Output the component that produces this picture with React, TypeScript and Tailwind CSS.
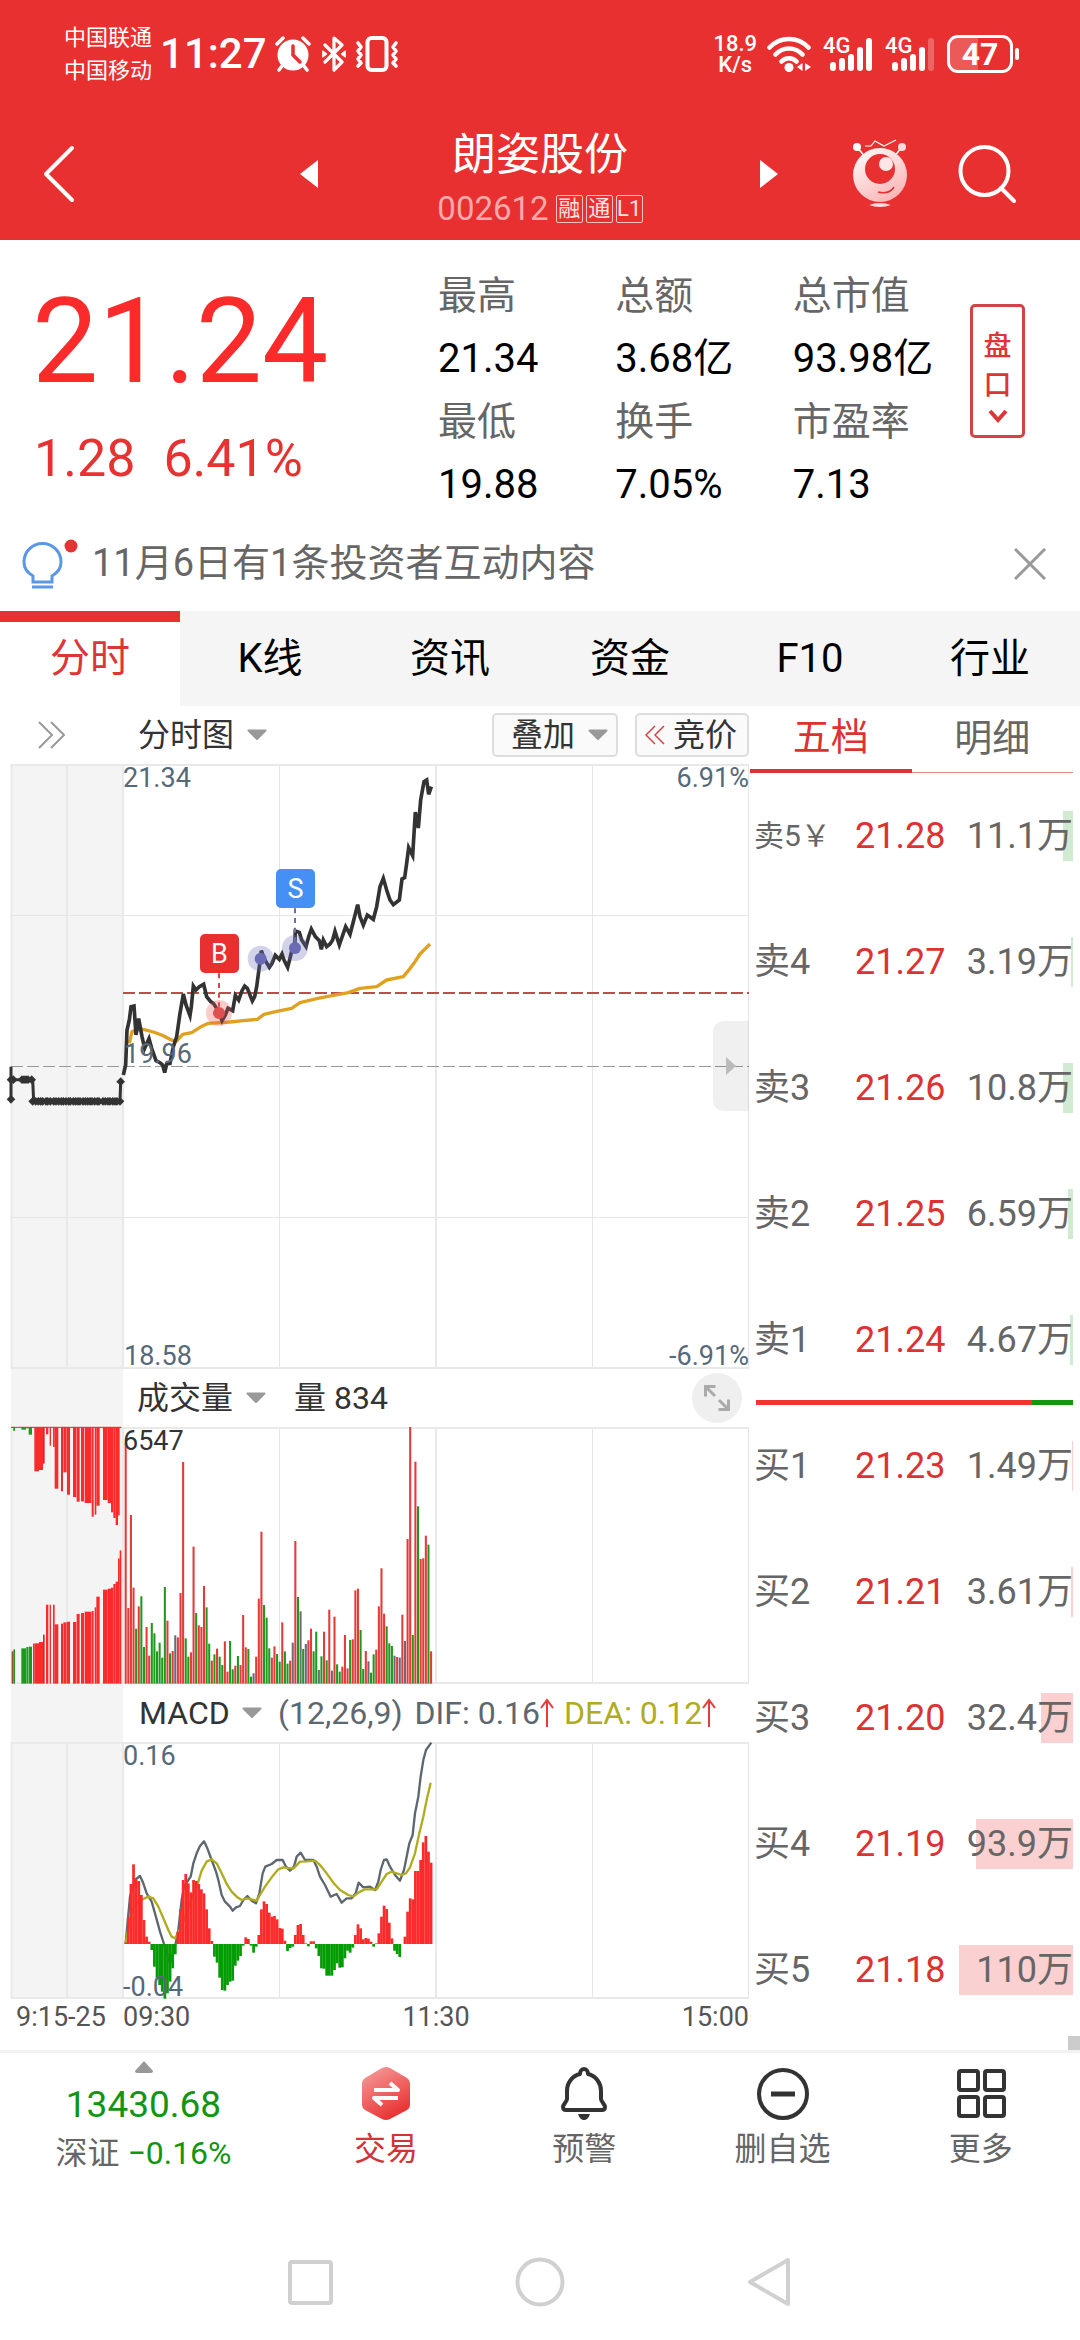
import type { ReactNode } from "react";
import clsx from "clsx";

const STEP = 7.83;
const FIRST_X = 377;

const colors: Record<string, string> = { r: "#e63a3a", g: "#1d9a1d", n: "#6b6878" };

// one entry per minute: colour key + top of the bar
const volume =
  "r310 r805 r526 r744 g867 r800 g770 g922 r862 r948 g850 g881 g935 g909 g954 g742 r843 g941 r934 n887 r893 r760 r367 g896 g951 r938 r621 g820 r857 r862 r739 g803 g912 r963 g944 r927 g951 g976 r905 r996 g904 g989 r978 g949 r976 r826 r923 g928 g1011 n1001 r951 r777 r576 g796 g834 g926 r954 r920 g943 g966 r848 g935 g972 r963 n909 r604 g772 n815 g928 n913 r902 r867 g935 g876 n991 g950 r876 g962 r810 n993 r831 g974 g996 r981 r886 r986 g901 r899 r752 r747 g871 g988 r934 n965 g999 g944 r930 r800 r686 r822 g860 g911 g919 n948 r952 n954 r825 n904 r598 r262 g886 r366 g500 r658 r656 r588 g615 r935"
    .split(" ")
    .map((v) => ({ fill: colors[v[0]], top: Number(v.slice(1)) }));

// call auction bars: x, width, lower bar top, upper bar bottom
const auction: [string, number, number, number, number][] = [
  ["#a8442a", 35, 5, 935, 264], ["#1d9a1d", 40, 5, 929, 274], ["#1d9a1d", 64, 14, 926, 270],
  ["#1d9a1d", 79, 6, 922, 266], ["#1d9a1d", 86, 10, 921, 285], ["#fb2b2b", 99, 4, 912, 263],
  ["#fb2b2b", 103, 14, 911, 395], ["#fb2b2b", 117, 12, 907, 391], ["#c92f30", 129, 5, 885, 372],
  ["#fb2b2b", 138, 7, 795, 284], ["#fb2b2b", 149, 4, 795, 318], ["#fb2b2b", 159, 5, 795, 322],
  ["#fb2b2b", 164, 11, 854, 447], ["#e03030", 183, 6, 852, 455], ["#fb2b2b", 190, 10, 848, 398],
  ["#fb2b2b", 201, 9, 846, 465], ["#fb2b2b", 219, 10, 847, 472], ["#fb2b2b", 230, 9, 823, 486],
  ["#fb2b2b", 243, 9, 820, 485], ["#fb2b2b", 254, 20, 816, 490], ["#fb2b2b", 275, 6, 814, 531],
  ["#fb2b2b", 284, 5, 803, 525], ["#fb2b2b", 289, 10, 771, 498], ["#fb2b2b", 309, 14, 750, 481],
  ["#fb2b2b", 323, 10, 747, 490], ["#fb2b2b", 333, 7, 744, 518], ["#fb2b2b", 340, 7, 733, 535],
  ["#fb2b2b", 347, 7, 726, 556], ["#fb2b2b", 354, 5, 656, 527], ["#fb2b2b", 359, 5, 632, 265],
];

const macd = [
  788, 712, 612, 553, 600, 603, 645, 720, 770, 785, 810, 860, 893, 915, 935, 956, 940, 905, 865, 823,
  755, 688, 600, 582, 610, 637, 600, 603, 612, 628, 640, 688, 745, 783, 830, 848, 893, 930, 932, 915,
  905, 902, 857, 842, 828, 797, 772, 777, 797, 818, 800, 765, 688, 664, 672, 698, 710, 708, 718, 744,
  746, 782, 813, 804, 800, 765, 735, 732, 765, 790, 799, 784, 784, 805, 828, 865, 866, 887, 887, 887,
  870, 850, 863, 862, 835, 812, 818, 803, 765, 733, 745, 778, 774, 776, 785, 800, 790, 760, 710, 677,
  687, 728, 775, 812, 822, 831, 792, 770, 695, 655, 658, 573, 573, 540, 487, 468, 515, 548,
];

const priceLine =
  "370,1425 377,1395 381,1290 388,1260 393,1220 402,1218 408,1305 416,1256 426,1310 434,1345 447,1316 455,1345 468,1382 480,1388 488,1395 494,1418 500,1392 510,1390 520,1340 530,1310 540,1240 550,1182 558,1215 570,1247 574,1220 580,1158 588,1170 598,1160 611,1153 620,1190 632,1205 640,1210 650,1225 657,1238 666,1262 676,1245 684,1225 698,1232 706,1186 716,1200 726,1172 734,1158 742,1165 757,1203 764,1190 770,1160 778,1100 784,1052 792,1075 808,1102 816,1090 826,1066 838,1078 846,1062 852,1080 863,1102 870,1075 876,1050 884,1045 886,993 898,997 905,1020 918,1040 926,1010 934,987 946,1010 958,1022 964,1048 970,1020 980,1040 990,1032 998,1020 1005,994 1018,1035 1030,1000 1037,980 1050,1003 1060,965 1073,914 1080,950 1090,975 1102,945 1120,958 1130,920 1140,860 1150,835 1160,870 1170,900 1180,914 1198,900 1206,837 1214,833 1220,790 1226,743 1238,767 1246,636 1255,684 1262,600 1272,545 1280,540 1286,583 1294,560";

const averageLine =
  "388,1330 396,1295 410,1290 430,1288 460,1296 485,1305 510,1318 528,1325 548,1303 575,1298 600,1282 625,1270 690,1266 730,1262 772,1258 792,1243 830,1234 875,1225 900,1208 950,1196 1000,1186 1045,1178 1080,1165 1130,1160 1160,1140 1210,1130 1225,1112 1245,1085 1260,1062 1290,1032";

const difLine =
  "377,790 390,650 405,600 420,588 430,610 440,640 455,665 465,700 480,755 492,792 510,850 527,790 535,750 545,660 552,620 565,600 572,590 580,550 590,520 600,498 612,484 622,505 635,540 648,575 655,600 665,645 675,665 690,680 698,692 708,682 720,678 730,660 742,648 755,662 768,670 778,640 788,580 796,560 815,552 830,540 848,540 858,560 870,572 882,560 890,530 902,518 915,540 940,540 950,560 960,590 975,615 992,650 1010,642 1025,668 1040,655 1055,655 1067,640 1076,608 1090,622 1110,620 1125,630 1135,605 1142,570 1152,540 1160,538 1170,560 1185,585 1200,602 1212,570 1220,530 1228,490 1238,465 1245,400 1255,350 1262,290 1270,240 1278,210 1294,188";

const deaLine =
  "377,790 395,690 415,665 430,657 445,650 460,655 475,680 490,715 505,750 515,770 525,775 545,740 570,670 595,605 605,572 620,545 635,538 650,550 665,580 680,612 695,635 710,650 725,660 742,655 770,662 780,645 795,620 815,592 835,568 850,562 880,566 900,545 920,544 945,542 960,555 980,580 1000,608 1020,630 1045,645 1060,650 1075,638 1095,628 1130,628 1145,605 1160,582 1175,575 1190,580 1205,585 1218,580 1230,562 1245,520 1258,460 1270,410 1280,360 1292,308";

const auctionDots = [
  ...[33, 40, 66, 72, 78, 84, 95].map((x) => [x, 1439]),
  [33, 1498],
  ...[98, 107, 115, 122, 128, 138, 143, 151, 161, 168, 176, 184, 190, 198, 206, 211, 220, 227, 234, 240, 249, 256, 263, 270, 276, 284, 292, 297, 309, 316, 324, 330, 338, 345, 351, 360].map((x) => [x, 1504]),
  [362, 1445],
];

const stats = [
  ["最高", "总额", "总市值"],
  ["21.34", "3.68亿", "93.98亿"],
  ["最低", "换手", "市盈率"],
  ["19.88", "7.05%", "7.13"],
];

const tabs = ["分时", "K线", "资讯", "资金", "F10", "行业"];

const asks = [
  { label: "卖5￥", price: "21.28", volume: "11.1万", bar: 10 },
  { label: "卖4", price: "21.27", volume: "3.19万", bar: 2 },
  { label: "卖3", price: "21.26", volume: "10.8万", bar: 10 },
  { label: "卖2", price: "21.25", volume: "6.59万", bar: 5 },
  { label: "卖1", price: "21.24", volume: "4.67万", bar: 3 },
];

const bids = [
  { label: "买1", price: "21.23", volume: "1.49万", bar: 1 },
  { label: "买2", price: "21.21", volume: "3.61万", bar: 2 },
  { label: "买3", price: "21.20", volume: "32.4万", bar: 32 },
  { label: "买4", price: "21.19", volume: "93.9万", bar: 97 },
  { label: "买5", price: "21.18", volume: "110万", bar: 114 },
];

function SignalBars({ weak }: { weak?: boolean }) {
  return (
    <span className="relative block h-[36px] w-[50px] shrink-0">
      <span className="absolute left-0 top-0 text-[22px] leading-[20px] font-medium">4G</span>
      <svg viewBox="0 0 50 36" className="h-full w-full" stroke="#fff" strokeWidth="6" strokeLinecap="round">
        <path d="M10 29v3M19 25v7M28 21v11M37 14v18" />
        <path d="M46 5v27" opacity={weak ? 0.25 : 1} />
      </svg>
    </span>
  );
}

function StatusBar() {
  return (
    <div className="flex h-[108px] items-center pl-16 pr-[61px]">
      <div className="text-[22px] leading-[33px]">
        <div>中国联通</div>
        <div>中国移动</div>
      </div>
      <span className="ml-2 text-[42px] leading-none font-medium">11:27</span>
      <svg viewBox="0 0 36 36" className="ml-2 h-9 w-9">
        <circle cx="18" cy="19" r="15.5" fill="#fff" />
        <path d="M2 8l6-6M28 2l6 6M7 30l-3 4M29 30l3 4" stroke="#fff" strokeWidth="3.5" strokeLinecap="round" />
        <path d="M18 10v9l7 7" fill="none" stroke="#e83030" strokeWidth="3.5" strokeLinecap="round" />
      </svg>
      <svg viewBox="0 0 26 36" className="ml-2.5 h-9 w-[26px]" fill="none" stroke="#fff" strokeWidth="3.2" strokeLinejoin="round" strokeLinecap="round">
        <path d="M4 9l17 17-8 8V2l8 7L4 26" />
        <path d="M2 15l4 3-4 3zM24 15l-4 3 4 3z" fill="#fff" strokeWidth="1" />
      </svg>
      <svg viewBox="0 0 44 36" className="ml-2 h-9 w-11" fill="none" stroke="#fff" strokeWidth="3.2" strokeLinejoin="round" strokeLinecap="round">
        <rect x="12.500" y="2" width="19" height="32" rx="4" strokeWidth="4" />
        <path d="M3 7l3 4-3 4 3 4-3 4 3 4-3 3M41 7l-3 4 3 4-3 4 3 4-3 4 3 3" strokeWidth="3.6" />
      </svg>
      <div className="ml-auto mr-2.5 text-center text-[22px] leading-[21px] font-medium">
        <div>18.9</div>
        <div>K/s</div>
      </div>
      <svg viewBox="0 0 44 36" className="mr-3 h-9 w-11 shrink-0" fill="none" stroke="#fff" strokeWidth="4.5" strokeLinecap="round">
        <path d="M2.500 11.500C13 0 31 0 41.500 11.500M8.500 18.500c7.500-8 19.500-8 27 0M14.500 25.500c4-4.500 11-4.500 15 0" />
        <circle cx="22" cy="31.500" r="4.500" fill="#fff" stroke="none" />
        <path d="M35.500 27v8l-5.500-4zM38 27v8l6-4z" fill="#fff" stroke="none" />
      </svg>
      <SignalBars />
      <span className="w-3" />
      <SignalBars weak />
      <div className="relative ml-3 flex h-[38px] w-[66px] shrink-0 items-center justify-center overflow-hidden rounded-[11px] border-3 border-white">
        <span className="absolute inset-y-0 left-0 w-[47%] bg-white/20" />
        <span className="relative text-[32px] leading-none font-bold">47</span>
      </div>
      <span className="ml-0.5 h-3 w-1 rounded-full bg-white" />
    </div>
  );
}

function TitleBar() {
  return (
    <div className="grid h-[132px] grid-cols-[1fr_210px_1fr] items-center">
      <div className="flex items-center justify-between pl-[43px] pr-[117px]">
        <button aria-label="返回">
          <svg viewBox="0 0 32 58" className="h-[58px] w-8" fill="none" stroke="#fff" strokeWidth="4" strokeLinecap="round" strokeLinejoin="round">
            <path d="M29 3L3 29l26 26" />
          </svg>
        </button>
        <button aria-label="上一只">
          <svg viewBox="0 0 18 28" className="h-7 w-[18px]" fill="#fff">
            <path d="M18 0v28L0 14z" />
          </svg>
        </button>
      </div>
      <div className="flex flex-col items-center pt-1.5">
        <h1 className="text-[44px] leading-[64px]">朗姿股份</h1>
        <div className="flex items-center gap-[3px]">
          <span className="mr-1 text-[33px] leading-[44px] text-[#fba9a9]">002612</span>
          {["融", "通", "L1"].map((tag) => (
            <span
              key={tag}
              className="flex h-7 w-[27px] items-center justify-center rounded-[2px] border border-[#fbc4c4] text-[22px] leading-none text-[#ffe3e3]"
            >
              {tag}
            </span>
          ))}
        </div>
      </div>
      <div className="flex items-center justify-between pl-[115px] pr-16">
        <button aria-label="下一只">
          <svg viewBox="0 0 18 28" className="h-7 w-[18px]" fill="#fff">
            <path d="M0 0v28l18-14z" />
          </svg>
        </button>
        <div className="flex w-[164px] items-center justify-between">
          <button aria-label="智能助手">
            <svg viewBox="0 0 56 70" className="h-[70px] w-14" fill="none">
              <defs>
                <linearGradient id="robot" x1="0" y1="0" x2="0.600" y2="1">
                  <stop offset="0" stopColor="#fff" />
                  <stop offset="1" stopColor="#fcb7b7" />
                </linearGradient>
              </defs>
              <path d="M5 8l9 11M50 8l-9 11" stroke="#fff" strokeWidth="1.500" />
              <circle cx="5" cy="8" r="4" fill="#fff" />
              <circle cx="50" cy="8" r="4" fill="#ffdcdc" />
              <path d="M13 7h6l4-5 9 5L44 1" stroke="#fff" strokeWidth="1.200" />
              <circle cx="28" cy="36" r="27" fill="url(#robot)" />
              <circle cx="28" cy="30" r="15" fill="#e83030" />
              <circle cx="34" cy="25" r="7" fill="#ffe6e6" />
              <path d="M26 53q11 3 16-5" stroke="#e83030" strokeWidth="1.500" />
              <path d="M17 66q11-4 22 0-11 4-22 0z" fill="#fdd" />
            </svg>
          </button>
          <button aria-label="搜索">
            <svg viewBox="0 0 58 60" className="h-[60px] w-[58px]" fill="none" stroke="#fff" strokeWidth="4" strokeLinecap="round">
              <circle cx="26.500" cy="27" r="24" />
              <path d="M43 44l13 13" />
            </svg>
          </button>
        </div>
      </div>
    </div>
  );
}

function Quote() {
  return (
    <section className="flex pt-6">
      <div className="w-[438px] shrink-0 pl-8 text-[#fb2b2b]">
        <div className="text-[118px] leading-[156px]">21.24</div>
        <div className="flex gap-7 pl-0.5 text-[52px] leading-[78px] text-[#e83232]">
          <span>1.28</span>
          <span>6.41%</span>
        </div>
      </div>
      <table className="w-[532px] shrink-0 table-fixed text-left">
        <tbody>
          {stats.map((row, i) => (
            <tr key={i} className="h-[63px]">
              {row.map((cell) =>
                i % 2 === 0 ? (
                  <th key={cell} className="p-0 text-[39px] leading-[60px] font-normal text-[#666]">{cell}</th>
                ) : (
                  <td key={cell} className="p-0 text-[40px] leading-[60px] text-black">{cell}</td>
                )
              )}
            </tr>
          ))}
        </tbody>
      </table>
      <button className="ml-auto mr-[55px] mt-10 flex h-[134px] w-[55px] shrink-0 flex-col items-center rounded-[5px] border-3 border-[#d24444] pt-5 text-[28px] leading-[39px] font-medium text-[#dc3535]">
        <span>盘</span>
        <span>口</span>
        <svg viewBox="0 0 20 16" className="mt-1 h-4 w-5" fill="none" stroke="#dc3535" strokeWidth="4">
          <path d="M2 2l8 9 8-9" />
        </svg>
      </button>
    </section>
  );
}

function Tip() {
  return (
    <div className="flex h-[95px] items-center pl-[22px] pr-[34px] text-[38px] text-[#666]">
      <svg viewBox="0 0 58 54" className="h-[54px] w-[58px]" fill="none" stroke="#5a97e6" strokeWidth="3">
        <path d="M11 45v-6C4 35 2 30 2 25a18 18 0 0 1 37 0c0 5-2 10-9 14v6zM10 50h21" />
        <circle cx="49" cy="9" r="6.500" fill="#e23434" stroke="none" />
      </svg>
      <p className="ml-3">11月6日有1条投资者互动内容</p>
      <button aria-label="关闭" className="ml-auto">
        <svg viewBox="0 0 32 32" className="h-8 w-8" stroke="#999" strokeWidth="3">
          <path d="M1 1l30 30M31 1L1 31" />
        </svg>
      </button>
    </div>
  );
}

function Dropdown({ label, options, className }: { label: string; options: string[]; className?: string }) {
  return (
    <label className={clsx("relative inline-flex items-center text-[32px] leading-[40px] text-[#333]", className)}>
      <select aria-label={label} className="appearance-none bg-transparent pr-8 outline-none">
        {options.map((o) => (
          <option key={o}>{o}</option>
        ))}
      </select>
      <svg viewBox="0 0 20 12" className="pointer-events-none -ml-5 h-3 w-5" fill="#999" stroke="#999" strokeWidth="2" strokeLinejoin="round">
        <path d="M1.500 1.500h17L10 10z" />
      </svg>
    </label>
  );
}

function Grid({ height, rows = [] }: { height: number; rows?: number[] }) {
  return (
    <g fill="none" stroke="#e6e6e6">
      <rect x="11" y="0" width="112" height={height} fill="#f4f4f4" stroke="none" />
      <path d={`M11.500 0V${height}M67 0V${height}M123 0V${height}M436 0V${height}`} strokeWidth="2" stroke="#e9e9e9" />
      <path d={`M279.500 0V${height}M592.500 0V${height}M748.500 0V${height}`} />
      <path d={`M11 1H749M11 ${height - 1}H749`} strokeWidth="2" stroke="#e9e9e9" />
      {rows.map((y) => (
        <path key={y} d={`M11 ${y}H749`} />
      ))}
    </g>
  );
}

function PaneHeader({ children }: { children: ReactNode }) {
  return (
    <div className="flex h-[58px] items-center pl-[11px]">
      <div className="h-full w-28 shrink-0 bg-[#f4f4f4]" />
      {children}
    </div>
  );
}

function PriceChart() {
  return (
    <div className="relative">
      <svg viewBox="0 0 750 605" className="block h-auto w-full overflow-visible" fontSize="27" fill="#56697a">
        <Grid height={605} rows={[151.5, 453.5]} />
        <path d="M123 229H749" stroke="#c04b4b" strokeWidth="2" strokeDasharray="12 4" />
        <path d="M11 302.500H749" stroke="#999" strokeDasharray="12 4" />
        <g transform="translate(0 -164) scale(0.33333)" fill="none" strokeLinejoin="round">
          <polyline points={averageLine} stroke="#e0a020" strokeWidth="10" />
          <path d="M33 1400V1498M33 1439H98L101 1504H360L362 1445" stroke="#333" strokeWidth="9" />
          <polyline points={priceLine} stroke="#333" strokeWidth="11" strokeLinejoin="miter" />
          {auctionDots.map(([x, y]) => (
            <path key={`${x}-${y}`} d={`M${x - 13} ${y}l13-13 13 13-13 13z`} fill="#333" />
          ))}
          <g strokeWidth="6" strokeDasharray="15 14">
            <path d="M657 1120V1220" stroke="#d04a4a" />
            <path d="M885 925V1030" stroke="#6b6bb5" />
          </g>
          <circle cx="657" cy="1239" r="39" fill="#e55" opacity="0.300" />
          <circle cx="657" cy="1239" r="18" fill="#e05050" />
          {[[782, 1076], [885, 1044]].map(([x, y]) => (
            <g key={x} fill="#6b6bb5">
              <circle cx={x} cy={y} r="39" opacity="0.300" />
              <circle cx={x} cy={y} r="18" />
            </g>
          ))}
        </g>
        <rect x="200" y="170" width="39" height="39" rx="5" fill="#e83030" />
        <rect x="276" y="105" width="39" height="39" rx="5" fill="#4690f5" />
        <g fill="#fff" textAnchor="middle">
          <text x="219.500" y="199">B</text>
          <text x="295.500" y="134">S</text>
        </g>
        <text x="123" y="23">21.34</text>
        <text x="124" y="299">19.96</text>
        <text x="124" y="601">18.58</text>
        <g textAnchor="end">
          <text x="749" y="23">6.91%</text>
          <text x="749" y="601">-6.91%</text>
        </g>
      </svg>
      <button aria-label="收起盘口" className="absolute right-px top-[257px] flex h-[90px] w-9 items-center justify-center rounded-l-[10px] bg-black/6">
        <svg viewBox="0 0 10 18" className="h-[18px] w-2.5" fill="#bbb">
          <path d="M0 0v18l10-9z" />
        </svg>
      </button>
    </div>
  );
}

function VolumeChart() {
  return (
    <svg viewBox="0 0 750 257" className="block h-auto w-full overflow-visible">
      <Grid height={257} />
      <g transform="translate(0 -87.333) scale(0.33333)">
        <path d="M33 263H364" stroke="#e05050" strokeWidth="4" />
        {auction.map(([fill, x, w, low, high]) => (
          <g key={x} fill={fill}>
            <rect x={x} y={low} width={w} height={1032 - low} />
            <rect x={x} y="262" width={w} height={high - 262} />
          </g>
        ))}
        {volume.map((v, i) => (
          <rect key={i} x={FIRST_X + i * STEP - 3} y={v.top} width="6.200" height={1032 - v.top} fill={v.fill} />
        ))}
      </g>
      <text x="123" y="23" fontSize="27" fill="#333">6547</text>
    </svg>
  );
}

function MacdChart() {
  return (
    <svg viewBox="0 0 750 257" className="block h-auto w-full overflow-visible" fontSize="27" fill="#56697a">
      <Grid height={257} />
      <g transform="translate(0 -62) scale(0.33333)">
        <g fill="none" strokeWidth="7" strokeLinejoin="round">
          <polyline points={difLine} stroke="#5d6770" />
          <polyline points={deaLine} stroke="#b0ac20" />
        </g>
        {macd.map((y, i) => (
          <rect
            key={i}
            x={FIRST_X + i * STEP - 4}
            y={Math.min(y, 792)}
            width="8.200"
            height={Math.abs(792 - y)}
            fill={y < 792 ? "#fb2b2b" : "#049c04"}
          />
        ))}
      </g>
      <text x="123" y="23">0.16</text>
      <text x="123" y="254">-0.04</text>
    </svg>
  );
}

function Charts() {
  return (
    <div className="min-w-0 flex-1">
      <div className="flex h-[58px] items-center">
        <button aria-label="展开" className="ml-[37px] w-[101px]">
          <svg viewBox="0 0 30 30" className="h-[30px] w-[30px]" fill="none" stroke="#999" strokeWidth="2">
            <path d="M2 2l13 13L2 28M14 2l13 13-13 13" />
          </svg>
        </button>
        <Dropdown label="图表类型" options={["分时图"]} />
        <Dropdown
          label="叠加"
          options={["叠加"]}
          className="ml-auto h-[44px] rounded-[5px] border-2 border-[#ddd] bg-[#fafafa] pl-[17px] pr-2"
        />
        <button className="ml-[17px] mr-px flex h-[44px] items-center gap-2 rounded-[5px] border-2 border-[#ddd] bg-[#fafafa] pl-2 pr-2.5 text-[32px] leading-[40px] text-[#333]">
          <svg viewBox="0 0 20 20" className="h-5 w-5" fill="none" stroke="#d24444" strokeWidth="1.500">
            <path d="M10 1l-9 9 9 9M19 1l-9 9 9 9" />
          </svg>
          竞价
        </button>
      </div>
      <PriceChart />
      <PaneHeader>
        <Dropdown label="副图一" options={["成交量"]} className="ml-3.5" />
        <span className="ml-7 text-[32px] text-[#333]">量 834</span>
        <button aria-label="全屏" className="ml-auto mr-2 flex h-[50px] w-[50px] items-center justify-center rounded-full bg-[#efefef]">
          <svg viewBox="0 0 26 26" className="h-[26px] w-[26px]" fill="none" stroke="#aaa" strokeWidth="3">
            <path d="M1.500 11.500v-10h10M2 2l9 9M24.500 14.500v10h-10M24 24l-9-9" />
          </svg>
        </button>
      </PaneHeader>
      <VolumeChart />
      <PaneHeader>
        <Dropdown label="副图二" options={["MACD"]} className="ml-4" />
        <div className="ml-4 flex items-center whitespace-nowrap text-[32px] text-[#5d6770]">
          <span className="mr-3">(12,26,9)</span>
          <span>DIF: 0.16</span>
          <UpArrow />
          <span className="ml-2.5 text-[#b0ac20]">DEA: 0.12</span>
          <UpArrow />
        </div>
      </PaneHeader>
      <MacdChart />
      <div className="flex h-[51px] pl-4 pr-px text-[27px] leading-[36px] text-[#555]">
        <span className="w-[107px] shrink-0 whitespace-nowrap">9:15-25</span>
        <div className="flex flex-1 justify-between">
          <span>09:30</span>
          <span>11:30</span>
          <span>15:00</span>
        </div>
      </div>
    </div>
  );
}

function UpArrow() {
  return (
    <svg viewBox="0 0 14 30" className="h-[30px] w-3.5" fill="none" stroke="#e83a3a" strokeWidth="2">
      <path d="M7 29V2M1 10l6-8 6 8" />
    </svg>
  );
}

function Levels({ rows, barClass }: { rows: typeof asks; barClass: string }) {
  return (
    <table className="w-full table-fixed text-left text-[36px] leading-[50px] whitespace-nowrap text-[#666]">
      <tbody>
        {rows.map((r) => (
          <tr key={r.label} className="h-[126px]">
            <th className={clsx("w-[105px] p-0 pl-1 font-normal", r.label.length > 2 && "text-[30px]")}>{r.label}</th>
            <td className="w-[98px] p-0 text-[#dd3232]">{r.price}</td>
            <td className="p-0">
              <div className="relative text-right">
                <span className={clsx("absolute inset-y-0 right-0", barClass)} style={{ width: r.bar }} />
                <span className="relative">{r.volume}</span>
              </div>
            </td>
          </tr>
        ))}
      </tbody>
    </table>
  );
}

function OrderBook() {
  return (
    <aside className="w-[330px] shrink-0 pr-[7px]">
      <div className="grid h-[67px] grid-cols-2 text-[38px]">
        <button className="border-b-4 border-[#d83434] text-[#dd3232]">五档</button>
        <button className="border-b border-[#e08a8a] pb-px text-[#666]">明细</button>
      </div>
      <div className="relative">
        <Levels rows={asks} barClass="bg-[#d0ebd2]" />
        <div className="absolute -bottom-0.5 left-1.5 right-0 flex h-[5px] bg-[#ee3434]">
          <span className="ml-auto w-[13%] bg-[#14960f]" />
        </div>
      </div>
      <Levels rows={bids} barClass="bg-[#fad0d0]" />
    </aside>
  );
}

function Action({ label, active, children }: { label: string; active?: boolean; children: ReactNode }) {
  return (
    <button className={clsx("flex flex-1 flex-col items-center pt-3 text-[32px] leading-[48px]", active ? "text-[#d03434]" : "text-[#666]")}>
      <svg viewBox="0 0 56 60" className="h-[60px] w-14" fill="none" stroke="#333" strokeWidth="4" strokeLinejoin="round">
        {children}
      </svg>
      {label}
    </button>
  );
}

function Toolbar() {
  return (
    <footer className="relative flex h-[150px] border-t-3 border-[#f2f2f2]">
      <span className="absolute -top-[17px] right-0 h-3.5 w-3 bg-[#ccc]" />
      <button className="flex w-[287px] flex-col items-center pt-2">
        <svg viewBox="0 0 20 12" className="h-3 w-5" fill="#999">
          <path d="M10 0l9 10q0 2-2 2H3q-2 0-2-2z" />
        </svg>
        <span className="mt-2 text-[37px] leading-[48px] text-[#129512]">13430.68</span>
        <span className="text-[32px] leading-[48px] text-[#666]">
          深证 <span className="text-[#129512]">−0.16%</span>
        </span>
      </button>
      <Action label="交易" active>
        <defs>
          <linearGradient id="hex" x1="0.200" y1="0" x2="0.700" y2="1">
            <stop offset="0" stopColor="#f59a98" />
            <stop offset="1" stopColor="#e82c2c" />
          </linearGradient>
        </defs>
        <path d="M28 2q2 0 4 1l17 10q3 2 3 5v22q0 3-3 5L32 54q-4 2-8 0L7 45q-3-2-3-5V18q0-3 3-5L24 3q2-1 4-1z" fill="url(#hex)" stroke="none" />
        <path d="M16 25h24l-8-7M40 33H16l8 7" stroke="#fff" strokeWidth="4" />
      </Action>
      <Action label="预警">
        <path d="M28 4c3 0 4 3 4 5 8 2 13 9 13 17v8c0 3 4 5 4 8q0 3-3 3H10q-3 0-3-3c0-3 4-5 4-8v-8c0-8 5-15 13-17 0-2 1-5 4-5z" />
        <path d="M22 49h12q-2 6-6 6t-6-6z" fill="#333" stroke="none" />
      </Action>
      <Action label="删自选">
        <circle cx="28" cy="29" r="24" />
        <path d="M16 29h24" strokeWidth="5" />
      </Action>
      <Action label="更多">
        <rect x="6" y="6" width="19" height="19" rx="2" />
        <rect x="32" y="6" width="19" height="19" rx="2" />
        <rect x="6" y="32" width="19" height="19" rx="2" />
        <rect x="32" y="32" width="19" height="19" rx="2" />
      </Action>
    </footer>
  );
}

function SystemNav() {
  return (
    <nav className="flex h-[140px] items-start justify-center gap-[180px] pt-[57px]">
      <button aria-label="最近任务">
        <svg viewBox="0 0 50 50" className="h-[50px] w-[50px]" fill="none" stroke="#d0d0d0" strokeWidth="4">
          <rect x="5" y="5" width="41" height="41" rx="2" />
        </svg>
      </button>
      <button aria-label="主屏幕">
        <svg viewBox="0 0 50 50" className="h-[50px] w-[50px]" fill="none" stroke="#d0d0d0" strokeWidth="4">
          <circle cx="25" cy="25" r="22.500" />
        </svg>
      </button>
      <button aria-label="后退">
        <svg viewBox="0 0 50 50" className="h-[50px] w-[50px]" fill="none" stroke="#d0d0d0" strokeWidth="4" strokeLinejoin="round">
          <path d="M43 3v44L5 25z" />
        </svg>
      </button>
    </nav>
  );
}

export default function App() {
  return (
    <main className="w-full overflow-hidden bg-white font-[Roboto,'Noto_Sans_CJK_SC',sans-serif]" lang="zh-CN">
      <header className="bg-[#e83030] text-white">
        <StatusBar />
        <TitleBar />
      </header>
      <Quote />
      <Tip />
      <nav className="grid h-[95px] grid-cols-6 bg-[#f5f5f5] text-[40px]">
        {tabs.map((tab, i) => (
          <button key={tab} className={clsx(i === 0 ? "border-t-11 border-[#e83030] bg-white pb-2.5 text-[#dd3636]" : "text-black")}>
            {tab}
          </button>
        ))}
      </nav>
      <div className="flex">
        <Charts />
        <OrderBook />
      </div>
      <Toolbar />
      <SystemNav />
    </main>
  );
}
